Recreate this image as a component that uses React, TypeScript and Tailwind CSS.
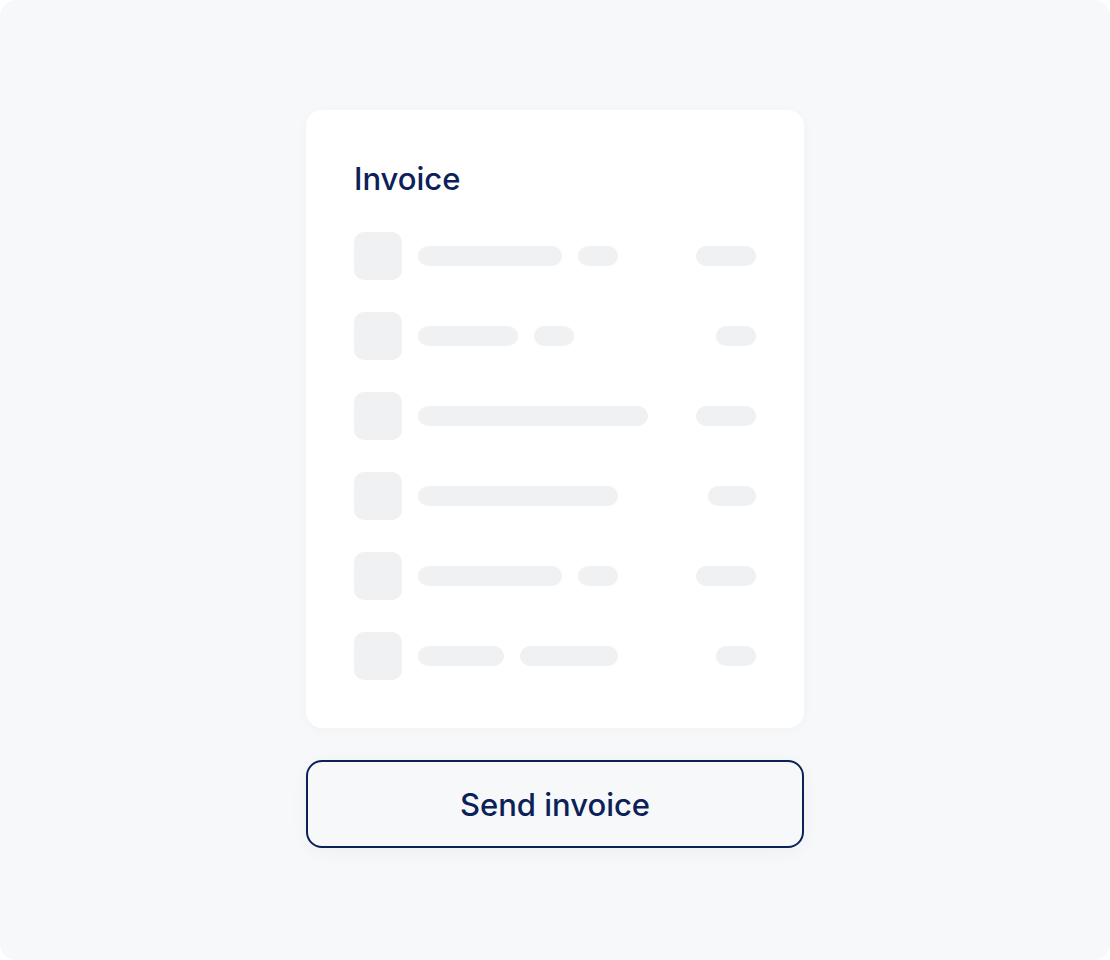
const rows: { left: number[]; right: number }[] = [
  { left: [144, 40], right: 60 },
  { left: [100, 40], right: 40 },
  { left: [230], right: 60 },
  { left: [200], right: 48 },
  { left: [144, 40], right: 60 },
  { left: [86, 98], right: 40 },
];

function SkeletonRow({ left, right }: { left: number[]; right: number }) {
  return (
    <div className="flex items-center">
      <div className="h-12 w-12 shrink-0 rounded-[10px] bg-[#f0f1f3]" />
      <div className="ml-4 flex gap-4">
        {left.map((w, i) => (
          <div key={i} className="h-5 rounded-full bg-[#f0f1f3]" style={{ width: w }} />
        ))}
      </div>
      <div className="ml-auto h-5 rounded-full bg-[#f0f1f3]" style={{ width: right }} />
    </div>
  );
}

export default function App() {
  return (
    <div className="h-[960px] w-[1110px] bg-white font-['Inter',sans-serif]">
      <div className="flex h-full w-full justify-center rounded-2xl bg-[#f7f8fa] pt-[110px]">
        <div className="flex w-[498px] flex-col gap-8">
          <div className="rounded-2xl bg-white px-12 pb-12 pt-12 shadow-[0_2px_12px_rgba(15,23,42,0.03)]">
            <h1 className="mb-[32px] text-[31px] leading-[42px] font-medium text-[#0b2157]">Invoice</h1>
            <div className="flex flex-col gap-8">
              {rows.map((r, i) => (
                <SkeletonRow key={i} left={r.left} right={r.right} />
              ))}
            </div>
          </div>
          <button className="h-[88px] w-full rounded-2xl border-2 border-[#0b2157] bg-[#f7f8fa] pt-0.5 text-[31px] font-medium text-[#0b2157] shadow-[0_4px_20px_rgba(15,23,42,0.04)]">
            Send invoice
          </button>
        </div>
      </div>
    </div>
  );
}
